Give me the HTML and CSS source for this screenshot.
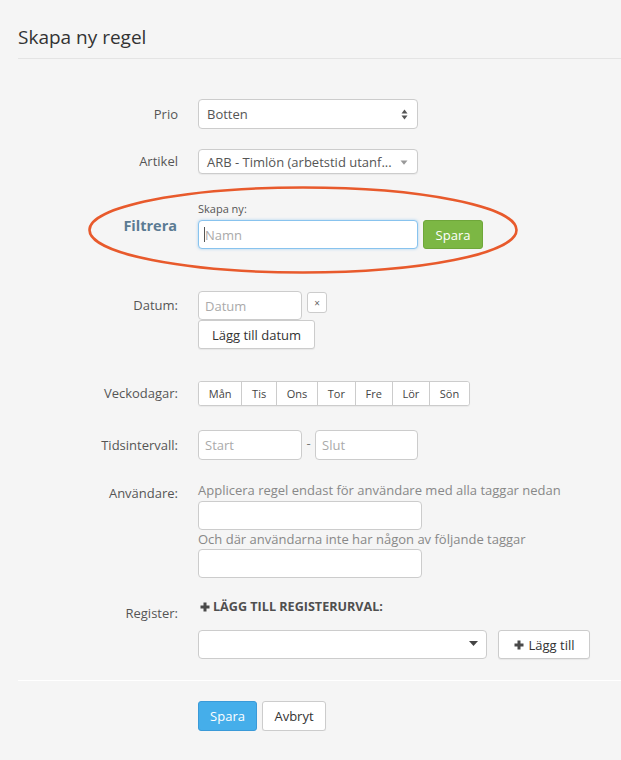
FILE: index.html
```html
<!DOCTYPE html>
<html lang="sv">
<head>
<meta charset="utf-8">
<title>Skapa ny regel</title>
<link rel="stylesheet" href="styles.css">
</head>
<body>
<div class="page">
  <header class="page-header">
    <h1 class="page-title">Skapa ny regel</h1>
  </header>

  <form class="rule-form">
    <div class="row row-prio">
      <label class="lbl lbl-30">Prio</label>
      <div class="ctl">
        <div class="select select-prio">
          <span class="select-text">Botten</span>
          <svg class="updown" width="7" height="11" viewBox="0 0 7 11"><path d="M3.5 0.5 L6.5 4.5 H0.5 Z M3.5 10.5 L6.5 6.5 H0.5 Z" fill="#555"/></svg>
        </div>
      </div>
    </div>

    <div class="row row-artikel">
      <label class="lbl lbl-25">Artikel</label>
      <div class="ctl">
        <div class="select select-artikel">
          <span class="select-text">ARB - Timlön (arbetstid utanf...</span>
          <svg class="caret-light" width="8" height="5" viewBox="0 0 8 5"><path d="M0.5 0.5 H7.5 L4 4.8 Z" fill="#999"/></svg>
        </div>
      </div>
    </div>

    <div class="row row-filter">
      <svg class="highlight" width="432" height="90" viewBox="0 0 432 90"><ellipse cx="216" cy="45" rx="213.5" ry="42.5" fill="none" stroke="#e85a2c" stroke-width="2.6"/></svg>
      <label class="lbl lbl-filter">Filtrera</label>
      <div class="ctl">
        <div class="small-label">Skapa ny:</div>
        <div class="inline">
          <div class="input-wrap">
            <input class="input input-focus input-namn" type="text" placeholder="Namn">
            <span class="text-caret"></span>
          </div>
          <button type="button" class="btn btn-green">Spara</button>
        </div>
      </div>
    </div>

    <div class="row row-datum">
      <label class="lbl lbl-29">Datum:</label>
      <div class="ctl">
        <div class="inline inline-top">
          <input class="input input-datum" type="text" placeholder="Datum">
          <button type="button" class="btn btn-x">×</button>
        </div>
        <button type="button" class="btn btn-default btn-add-date">Lägg till datum</button>
      </div>
    </div>

    <div class="row row-week">
      <label class="lbl lbl-25">Veckodagar:</label>
      <div class="ctl">
        <div class="btn-group">
          <button type="button" class="day">Mån</button>
          <button type="button" class="day">Tis</button>
          <button type="button" class="day">Ons</button>
          <button type="button" class="day">Tor</button>
          <button type="button" class="day">Fre</button>
          <button type="button" class="day">Lör</button>
          <button type="button" class="day">Sön</button>
        </div>
      </div>
    </div>

    <div class="row row-time">
      <label class="lbl lbl-30">Tidsintervall:</label>
      <div class="ctl">
        <div class="inline">
          <input class="input input-time" type="text" placeholder="Start">
          <span class="dash">-</span>
          <input class="input input-time input-slut" type="text" placeholder="Slut">
        </div>
      </div>
    </div>

    <div class="row row-users">
      <label class="lbl lbl-users">Användare:</label>
      <div class="ctl">
        <div class="help">Applicera regel endast för användare med alla taggar nedan</div>
        <input class="input input-tags" type="text">
        <div class="help help-2">Och där användarna inte har någon av följande taggar</div>
        <input class="input input-tags input-tags-2" type="text">
      </div>
    </div>

    <div class="row row-register">
      <label class="lbl lbl-register">Register:</label>
      <div class="ctl">
        <div class="section-head">
          <svg class="plus" width="10" height="10" viewBox="0 0 10 10"><path d="M3.5 0.5 H6.5 V3.5 H9.5 V6.5 H6.5 V9.5 H3.5 V6.5 H0.5 V3.5 H3.5 Z" fill="#4a4a4a"/></svg>
          <span>LÄGG TILL REGISTERURVAL:</span>
        </div>
        <div class="inline register-line">
          <div class="select select-register">
            <svg class="caret-dark" width="9" height="5" viewBox="0 0 9 5"><path d="M0 0 H9 L4.5 5 Z" fill="#444"/></svg>
          </div>
          <button type="button" class="btn btn-default btn-add">
            <svg class="plus" width="10" height="10" viewBox="0 0 10 10"><path d="M3.5 0.5 H6.5 V3.5 H9.5 V6.5 H6.5 V9.5 H3.5 V6.5 H0.5 V3.5 H3.5 Z" fill="#4a4a4a"/></svg>
            Lägg till
          </button>
        </div>
      </div>
    </div>

    <div class="form-footer">
      <button type="button" class="btn btn-blue">Spara</button>
      <button type="button" class="btn btn-default btn-cancel">Avbryt</button>
    </div>
  </form>
</div>
</body>
</html>
```

FILE: styles.css
```css
* { box-sizing: border-box; }

html, body {
  margin: 0;
  padding: 0;
  background: #f5f5f5;
}

body {
  font-family: "Open Sans", "Noto Sans", sans-serif;
  font-size: 13px;
  color: #555;
}

.page {
  padding-left: 18px;
}

.page-header {
  padding: 23px 0 7px;
  border-bottom: 1px solid #e4e4e4;
}

.page-title {
  margin: 0;
  font-size: 19px;
  line-height: 28px;
  font-weight: 400;
  color: #333;
}

.rule-form {
  padding-top: 40px;
  margin: 0;
}

.row {
  display: grid;
  grid-template-columns: 160px 1fr;
  column-gap: 20px;
  align-items: start;
}

.lbl {
  text-align: right;
  color: #555;
  font-size: 13px;
  line-height: 18px;
}
.lbl-30 { line-height: 30px; }
.lbl-29 { line-height: 29px; }
.lbl-25 { line-height: 25px; }
.lbl-users { padding-top: 3px; }
.lbl-register { padding-top: 6px; }
.lbl-filter {
  align-self: center;
  font-weight: 700;
  font-size: 14.5px;
  color: #5b7b93;
  padding-top: 1px;
  padding-right: 1px;
}

.row-artikel { margin-top: 20px; }
.row-filter { margin-top: 27px; position: relative; }
.row-datum { margin-top: 42px; }
.row-week { margin-top: 32px; }
.row-time { margin-top: 24px; }
.row-users { margin-top: 21px; }
.row-register { margin-top: 20px; }

.ctl {
  display: flex;
  flex-direction: column;
  align-items: flex-start;
}

.inline {
  display: flex;
  align-items: center;
}
.inline-top { align-items: flex-start; }

/* selects */
.select {
  display: flex;
  align-items: center;
  justify-content: space-between;
  background: #fff;
  border: 1px solid #ccc;
  border-radius: 4px;
  color: #555;
}
.select-prio {
  width: 220px;
  height: 30px;
  padding: 0 9px 0 8px;
  font-size: 13px;
}
.select-artikel {
  width: 220px;
  height: 25px;
  padding: 0 9px 0 8px;
  font-size: 13px;
  box-shadow: 0 1px 1px rgba(0,0,0,0.05);
}
.select-text { white-space: nowrap; }
.caret-light { margin-top: 1px; }
.select-register {
  width: 289px;
  height: 29px;
  padding: 0 8px 3px 0;
  justify-content: flex-end;
}

/* inputs */
.input {
  display: block;
  font-family: "Open Sans", "Noto Sans", sans-serif;
  font-size: 13px;
  color: #555;
  background: #fff;
  border: 1px solid #ccc;
  border-radius: 4px;
  padding: 0 6px;
  margin: 0;
  outline: none;
}
.input::placeholder { color: #aaa; }

.input-wrap { position: relative; }
.input-namn {
  width: 220px;
  height: 29px;
}
.input-focus {
  border-color: #88c3ee;
  box-shadow: 0 0 3px rgba(102, 175, 233, 0.55);
}
.text-caret {
  position: absolute;
  left: 6px;
  top: 7px;
  width: 1px;
  height: 15px;
  background: #555;
}

.small-label {
  font-size: 11px;
  line-height: 15px;
  color: #555;
  margin-bottom: 4px;
}

.input-datum {
  width: 104px;
  height: 29px;
}
.input-time {
  width: 104px;
  height: 30px;
}
.input-slut { width: 103px; }
.dash {
  width: 13px;
  text-align: center;
  color: #777;
  margin-top: -4px;
}
.input-tags {
  width: 224px;
  height: 29px;
  margin-top: 2px;
}
.input-tags-2 { margin-top: 1px; }

.help {
  font-size: 13px;
  line-height: 18px;
  color: #888;
}

/* buttons */
.btn {
  font-family: "Open Sans", "Noto Sans", sans-serif;
  font-size: 13px;
  border-radius: 3px;
  border: 1px solid #ccc;
  background: #fff;
  color: #333;
  padding: 0 10px;
  margin: 0;
  cursor: pointer;
  display: inline-flex;
  align-items: center;
  justify-content: center;
}
.btn-default {
  box-shadow: 0 1px 1px rgba(0,0,0,0.06);
}
.btn-green {
  margin-left: 5px;
  width: 60px;
  height: 29px;
  background: #7cb744;
  border-color: #6fa73a;
  color: #fff;
}
.btn-x {
  margin-left: 5px;
  margin-top: 1px;
  width: 20px;
  height: 21px;
  padding: 0;
  font-size: 10px;
  color: #666;
}
.btn-add-date {
  width: 117px;
  height: 29px;
  margin-top: 0;
}
.btn-add {
  margin-left: 11px;
  width: 92px;
  height: 29px;
  gap: 5px;
  font-size: 13px;
}
.btn-blue {
  width: 59px;
  height: 30px;
  background: #45aeea;
  border-color: #3a9ad8;
  color: #fff;
}
.btn-cancel {
  margin-left: 5px;
  width: 64px;
  height: 30px;
}

.btn-group {
  display: flex;
  width: 272px;
  height: 25px;
  border: 1px solid #ccc;
  border-radius: 3px;
  background: #fff;
  overflow: hidden;
  box-shadow: 0 1px 1px rgba(0,0,0,0.05);
}
.day {
  flex: 1 1 auto;
  font-family: "Open Sans", "Noto Sans", sans-serif;
  font-size: 11px;
  color: #444;
  background: #fff;
  border: 0;
  border-left: 1px solid #ccc;
  padding: 0 9px;
  margin: 0;
  height: 23px;
}
.day:first-child { border-left: 0; }

.section-head {
  display: flex;
  align-items: center;
  gap: 3px;
  font-weight: 700;
  font-size: 12.6px;
  line-height: 18px;
  color: #4f4f4f;
  padding-left: 2px;
}
.register-line { margin-top: 14px; }

.form-footer {
  margin-top: 21px;
  border-top: 1px solid #fff;
  padding: 20px 0 0 180px;
  display: flex;
}

.highlight {
  position: absolute;
  left: 69px;
  top: -16px;
  pointer-events: none;
}
```
